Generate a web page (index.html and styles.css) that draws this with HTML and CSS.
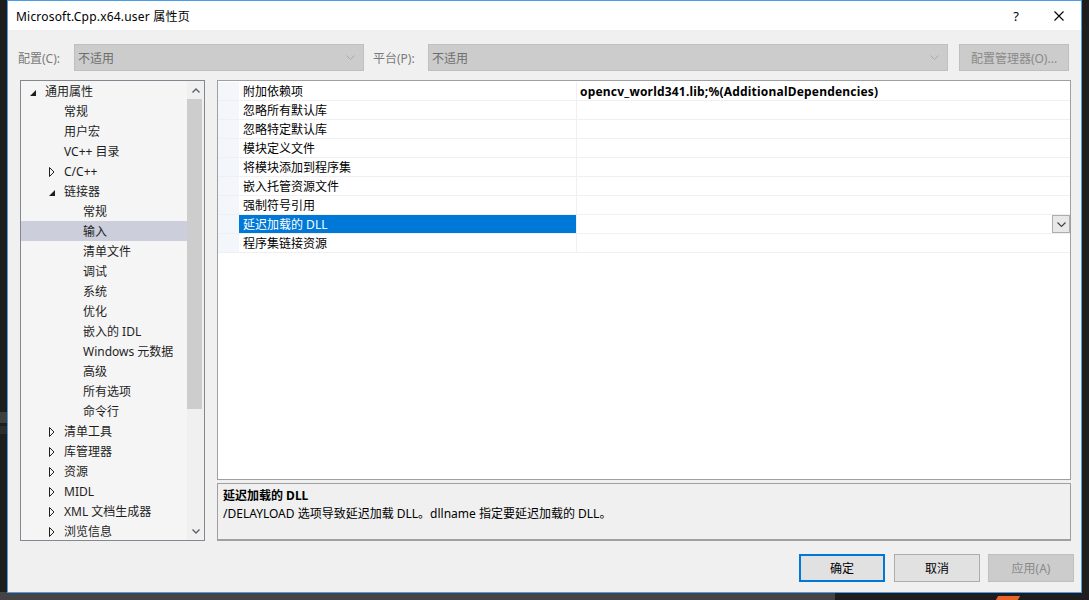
FILE: index.html
```html
<!DOCTYPE html>
<html lang="zh-CN">
<head>
<meta charset="utf-8">
<title>Microsoft.Cpp.x64.user 属性页</title>
<link rel="stylesheet" href="styles.css">
</head>
<body>
<div class="desktop">
  <div class="bg-band band1"></div>
  <div class="bg-band band2"></div>
  <div class="bottom-strip"><div class="strip-gray"></div><div class="strip-dark"><span class="orange"></span></div></div>

  <div class="dialog">
    <div class="titlebar">
      <span class="title">Microsoft.Cpp.x64.user 属性页</span>
      <div class="tb-right">
        <span class="help">?</span>
        <svg class="close" width="10" height="10" viewBox="0 0 10 10"><path d="M0.5,0.5 L9.5,9.5 M9.5,0.5 L0.5,9.5" stroke="#000" stroke-width="1.1" fill="none"/></svg>
      </div>
    </div>

    <div class="content">
      <div class="toprow">
        <span class="lbl lbl1">配置(C):</span>
        <div class="combo combo1"><span>不适用</span><svg width="9" height="5" viewBox="0 0 9 5"><polyline points="0.5,0.5 4.5,4.5 8.5,0.5" fill="none" stroke="#a8a8a8"/></svg></div>
        <span class="lbl lbl2">平台(P):</span>
        <div class="combo combo2"><span>不适用</span><svg width="9" height="5" viewBox="0 0 9 5"><polyline points="0.5,0.5 4.5,4.5 8.5,0.5" fill="none" stroke="#a8a8a8"/></svg></div>
        <div class="btn btn-disabled cfgbtn">配置管理器(O)...</div>
      </div>

      <div class="main">
        <div class="tree">
          <div class="tree-list">
            <div class="trow lv0"><span class="exp"><svg class="tri-open" width="7" height="6" viewBox="0 0 7 6"><polygon points="6,0 6,6 0,6" fill="#1e1e1e"/></svg></span>通用属性</div>
            <div class="trow lv1"><span class="exp"></span>常规</div>
            <div class="trow lv1"><span class="exp"></span>用户宏</div>
            <div class="trow lv1"><span class="exp"></span>VC++ 目录</div>
            <div class="trow lv1"><span class="exp"><svg class="tri-closed" width="6" height="10" viewBox="0 0 6 10"><polygon points="0.5,0.5 5,5 0.5,9.5" fill="none" stroke="#1e1e1e"/></svg></span>C/C++</div>
            <div class="trow lv1"><span class="exp"><svg class="tri-open" width="7" height="6" viewBox="0 0 7 6"><polygon points="6,0 6,6 0,6" fill="#1e1e1e"/></svg></span>链接器</div>
            <div class="trow lv2"><span class="exp"></span>常规</div>
            <div class="trow lv2 selected"><span class="exp"></span>输入</div>
            <div class="trow lv2"><span class="exp"></span>清单文件</div>
            <div class="trow lv2"><span class="exp"></span>调试</div>
            <div class="trow lv2"><span class="exp"></span>系统</div>
            <div class="trow lv2"><span class="exp"></span>优化</div>
            <div class="trow lv2"><span class="exp"></span>嵌入的 IDL</div>
            <div class="trow lv2"><span class="exp"></span>Windows 元数据</div>
            <div class="trow lv2"><span class="exp"></span>高级</div>
            <div class="trow lv2"><span class="exp"></span>所有选项</div>
            <div class="trow lv2"><span class="exp"></span>命令行</div>
            <div class="trow lv1"><span class="exp"><svg class="tri-closed" width="6" height="10" viewBox="0 0 6 10"><polygon points="0.5,0.5 5,5 0.5,9.5" fill="none" stroke="#1e1e1e"/></svg></span>清单工具</div>
            <div class="trow lv1"><span class="exp"><svg class="tri-closed" width="6" height="10" viewBox="0 0 6 10"><polygon points="0.5,0.5 5,5 0.5,9.5" fill="none" stroke="#1e1e1e"/></svg></span>库管理器</div>
            <div class="trow lv1"><span class="exp"><svg class="tri-closed" width="6" height="10" viewBox="0 0 6 10"><polygon points="0.5,0.5 5,5 0.5,9.5" fill="none" stroke="#1e1e1e"/></svg></span>资源</div>
            <div class="trow lv1"><span class="exp"><svg class="tri-closed" width="6" height="10" viewBox="0 0 6 10"><polygon points="0.5,0.5 5,5 0.5,9.5" fill="none" stroke="#1e1e1e"/></svg></span>MIDL</div>
            <div class="trow lv1"><span class="exp"><svg class="tri-closed" width="6" height="10" viewBox="0 0 6 10"><polygon points="0.5,0.5 5,5 0.5,9.5" fill="none" stroke="#1e1e1e"/></svg></span>XML 文档生成器</div>
            <div class="trow lv1"><span class="exp"><svg class="tri-closed" width="6" height="10" viewBox="0 0 6 10"><polygon points="0.5,0.5 5,5 0.5,9.5" fill="none" stroke="#1e1e1e"/></svg></span>浏览信息</div>
          </div>
          <div class="vscroll">
            <div class="sbtn"><svg width="8" height="5" viewBox="0 0 8 5"><polyline points="0.5,4.5 4,1 7.5,4.5" fill="none" stroke="#606060" stroke-width="1.4"/></svg></div>
            <div class="track"><div class="thumb"></div></div>
            <div class="sbtn"><svg width="8" height="5" viewBox="0 0 8 5"><polyline points="0.5,0.5 4,4 7.5,0.5" fill="none" stroke="#606060" stroke-width="1.4"/></svg></div>
          </div>
        </div>

        <div class="right">
          <div class="grid">
            <div class="prow"><span class="gut"></span><span class="pname">附加依赖项</span><span class="pval bold">opencv_world341.lib;%(AdditionalDependencies)</span></div>
            <div class="prow"><span class="gut"></span><span class="pname">忽略所有默认库</span><span class="pval"></span></div>
            <div class="prow"><span class="gut"></span><span class="pname">忽略特定默认库</span><span class="pval"></span></div>
            <div class="prow"><span class="gut"></span><span class="pname">模块定义文件</span><span class="pval"></span></div>
            <div class="prow"><span class="gut"></span><span class="pname">将模块添加到程序集</span><span class="pval"></span></div>
            <div class="prow"><span class="gut"></span><span class="pname">嵌入托管资源文件</span><span class="pval"></span></div>
            <div class="prow"><span class="gut"></span><span class="pname">强制符号引用</span><span class="pval"></span></div>
            <div class="prow sel"><span class="gut"></span><span class="pname">延迟加载的 DLL</span><span class="pval"><span class="ddbtn"><svg width="9" height="5" viewBox="0 0 9 5"><polyline points="0.5,0.5 4.5,4.5 8.5,0.5" fill="none" stroke="#404040" stroke-width="1.1"/></svg></span></span></div>
            <div class="prow"><span class="gut"></span><span class="pname">程序集链接资源</span><span class="pval"></span></div>
          </div>
          <div class="desc">
            <div class="desc-title">延迟加载的 DLL</div>
            <div class="desc-text">/DELAYLOAD 选项导致延迟加载 DLL。dllname 指定要延迟加载的 DLL。</div>
          </div>
        </div>
      </div>

      <div class="buttons">
        <div class="btn btn-default">确定</div>
        <div class="btn">取消</div>
        <div class="btn btn-disabled">应用(A)</div>
      </div>
    </div>
  </div>
</div>
</body>
</html>
```

FILE: styles.css
```css
* { box-sizing: border-box; }

html, body {
  margin: 0;
  padding: 0;
}

body {
  background: #1e1e1e;
  font-family: "Segoe UI", "Noto Sans", "Noto Sans CJK SC", sans-serif;
  font-size: 12px;
  color: #000;
  overflow: hidden;
}

.desktop {
  position: relative;
  width: 1089px;
  height: 600px;
  background: #1e1e1e;
  overflow: hidden;
}

.bg-band {
  position: absolute;
  left: 0;
  width: 8px;
}
.band1 { top: 412px; height: 11px; background: #3f3f3f; }
.band2 { top: 426px; height: 8px; background: #2d2d30; }

.bottom-strip {
  position: absolute;
  left: 0;
  bottom: 0;
  width: 1089px;
  height: 8px;
  display: flex;
}
.strip-gray { width: 835px; background: #444446; }
.strip-dark { flex: 1; background: #1e1e1e; position: relative; }
.orange {
  position: absolute;
  left: 162px;
  top: 4px;
  width: 22px;
  height: 4px;
  background: #e8622a;
  transform: skewX(-30deg);
}

.dialog {
  position: absolute;
  left: 7px;
  top: 0;
  width: 1075px;
  height: 593px;
  border: 1px solid #4e9be6;
  background: #f0f0f0;
  display: flex;
  flex-direction: column;
}

.titlebar {
  height: 29px;
  flex: none;
  background: #fff;
  display: flex;
  align-items: center;
  padding-left: 8px;
}
.title {
  font-size: 12px;
  letter-spacing: 0.2px;
  color: #000;
}
.tb-right {
  margin-left: auto;
  display: flex;
  align-items: center;
}
.help {
  font-size: 13px;
  margin-right: 35px;
}
.close {
  display: block;
  margin-right: 17px;
}

.content {
  flex: 1;
  display: flex;
  flex-direction: column;
  padding: 14px 10px 0 12px;
}

.toprow {
  display: flex;
  align-items: center;
  height: 27px;
}
.lbl {
  color: #7a7a7a;
}
.lbl1 { width: 56px; margin-left: -2px; }
.lbl2 { width: 55px; margin-left: 9px; }

.combo {
  height: 27px;
  background: #cccccc;
  border: 1px solid #bfbfbf;
  display: flex;
  align-items: center;
  justify-content: space-between;
  padding: 0 8px 0 3px;
  color: #6d6d6d;
}
.combo1 { width: 290px; }
.combo2 { width: 520px; }

.btn {
  width: 86px;
  height: 28px;
  background: #e1e1e1;
  border: 1px solid #adadad;
  display: flex;
  align-items: center;
  justify-content: center;
  color: #000;
}
.btn-default {
  border: 2px solid #0078d7;
}
.btn-disabled {
  background: #cccccc;
  border-color: #bfbfbf;
  color: #8a8a8a;
}
.cfgbtn {
  width: 110px;
  height: 27px;
  margin-left: 11px;
}

.main {
  display: flex;
  gap: 12px;
  margin-top: 9px;
  height: 461px;
}

.tree {
  width: 185px;
  border: 1px solid #828790;
  background: #f5f5f5;
  display: flex;
  overflow: hidden;
}
.tree-list {
  flex: 1;
  color: #1e1e1e;
}
.trow {
  height: 20px;
  line-height: 22px;
  display: flex;
  align-items: flex-start;
  white-space: nowrap;
  overflow: hidden;
}
.lv0 { padding-left: 5px; }
.lv1 { padding-left: 24px; }
.lv2 { padding-left: 43px; }
.trow.selected { background: #cccedb; }
.exp {
  width: 19px;
  height: 20px;
  flex: none;
  display: flex;
  align-items: center;
}
.exp svg { display: block; margin-left: 4px; }
.exp .tri-open { margin-top: 3px; }
.exp .tri-closed { margin-top: 1px; }

.vscroll {
  width: 17px;
  background: #f0f0f0;
  display: flex;
  flex-direction: column;
}
.sbtn {
  height: 18px;
  display: flex;
  align-items: center;
  justify-content: center;
}
.track {
  flex: 1;
  padding: 0 1px 0 0;
}
.thumb {
  width: 15px;
  height: 310px;
  background: #cdcdcd;
}

.right {
  width: 854px;
  display: flex;
  flex-direction: column;
  gap: 3px;
}

.grid {
  height: 400px;
  flex: none;
  border: 1px solid #a0a0a0;
  background: #fff;
  padding-top: 1px;
}
.prow {
  height: 19px;
  display: flex;
  border-bottom: 1px solid #f0f0f2;
}
.gut {
  width: 21px;
  flex: none;
  background: #f3f6fb;
}
.pname {
  width: 338px;
  flex: none;
  padding-left: 4px;
  line-height: 20px;
  height: 18px;
  overflow: hidden;
  border-right: 1px solid #f0f0f2;
  white-space: nowrap;
}
.pval {
  flex: 1;
  padding-left: 3px;
  line-height: 20px;
  height: 18px;
  display: flex;
  justify-content: flex-end;
  white-space: nowrap;
}
.pval.bold {
  font-weight: bold;
  letter-spacing: 0.2px;
  justify-content: flex-start;
  overflow: hidden;
}
.prow.sel .pname {
  background: #0078d7;
  color: #fff;
}
.ddbtn {
  width: 18px;
  height: 18px;
  background: #e8e8e8;
  border: 1px solid #adadad;
  display: flex;
  align-items: center;
  justify-content: center;
}

.desc {
  flex: 1;
  border: 1px solid #a0a0a0;
  border-bottom-width: 2px;
  padding: 3px 5px 0 5px;
  line-height: 18px;
}
.desc-title { font-weight: bold; }

.buttons {
  display: flex;
  justify-content: flex-end;
  gap: 9px;
  margin-top: 13px;
  margin-right: -3px;
}
.buttons .btn + .btn + .btn { margin-left: -1px; }
```
